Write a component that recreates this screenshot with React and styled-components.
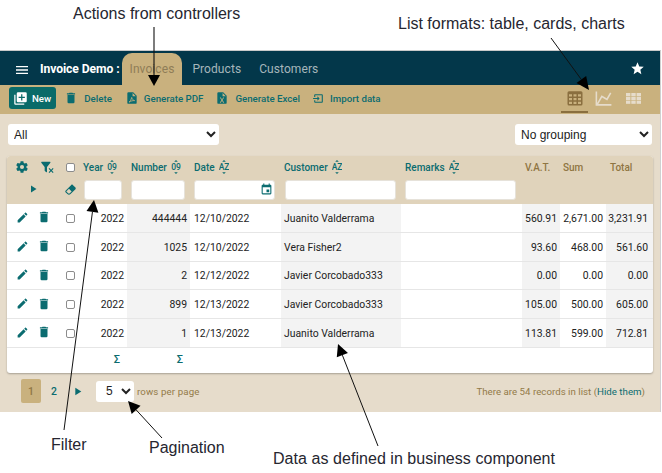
import React from 'react';
import styled, { createGlobalStyle } from 'styled-components';

const Global = createGlobalStyle`
  html, body { margin: 0; padding: 0; background: #fff; }
  body { font-family: Roboto, "Liberation Sans", sans-serif; }
`;

const TEAL = '#0b6c70';
const COLS = '30px 14px 32px 44px 63px 91px 120px 121px 38px 46px 47px';

const Page = styled.div`
  position: relative;
  width: 662px;
  height: 473px;
  overflow: hidden;
  padding-top: 50px;
  box-sizing: border-box;
`;
const Frame = styled.div`
  width: 660px;
  border-top: 1px solid #c9c9c9;
  border-right: 1px solid #d0d0d0;
  background: #e6dccb;
  height: 361px;
  display: flex;
  flex-direction: column;
  box-sizing: content-box;
`;
const NavBar = styled.div`
  height: 34px;
  background: #03374a;
  display: flex;
  align-items: flex-end;
  padding-left: 14px;
  flex: none;
`;
const Burger = styled.span`
  display: flex;
  width: 16px;
  margin-bottom: 7px;
  color: #fff;
`;
const Brand = styled.span`
  color: #fff;
  font-size: 12.2px;
  font-weight: 700;
  margin: 0 2px 9px 10px;
  white-space: nowrap;
  line-height: 14px;
  letter-spacing: -0.1px;
`;
const Tab = styled.span`
  height: 32px;
  box-sizing: border-box;
  padding: 9px ${p => p.$pad}px 0;
  font-size: 12px;
  line-height: 14px;
  letter-spacing: 0.08px;
  border-radius: 10px 10px 0 0;
  color: ${p => (p.$active ? '#8f7d57' : '#a6b6bb')};
  background: ${p => (p.$active ? '#c9b17e' : 'transparent')};
  margin-right: ${p => p.$gap}px;
`;
const StarSlot = styled.span`
  margin-left: auto;
  margin-right: 15px;
  margin-bottom: 9px;
  display: flex;
  color: #fff;
`;
const ToolBar = styled.div`
  height: 29px;
  flex: none;
  background: #c9b17e;
  display: flex;
  align-items: flex-start;
  padding: 2px 12px 0 9px;
  box-sizing: border-box;
`;
const ActionLink = styled.span`
  display: flex;
  align-items: center;
  gap: ${p => p.$gap ?? 6}px;
  font-size: 9.7px;
  font-weight: 500;
  color: ${p => (p.$primary ? '#fff' : TEAL)};
  background: ${p => (p.$primary ? '#0a6b69' : 'transparent')};
  border-radius: 3px;
  height: 22px;
  padding: 0 ${p => (p.$primary ? 5 : 0)}px 0 ${p => (p.$primary ? 4 : 0)}px;
  margin-right: ${p => p.$mr}px;
  white-space: nowrap;
  box-sizing: border-box;
`;
const Views = styled.div`
  margin: -2px 0 0 auto;
  display: flex;
  align-items: flex-start;
  height: 29px;
`;
const ViewItem = styled.span`
  width: ${p => p.$w}px;
  height: 28px;
  box-sizing: border-box;
  display: flex;
  align-items: center;
  justify-content: center;
  color: ${p => (p.$active ? '#8a6f3f' : '#e6dccb')};
  border-bottom: 2px solid ${p => (p.$active ? '#8a6f3f' : 'transparent')};
`;
const Body = styled.div`
  flex: 1;
  display: flex;
  flex-direction: column;
  padding: 10px 8px 0 7px;
`;
const FilterRow = styled.div`
  display: flex;
  justify-content: space-between;
  height: 21px;
  margin-bottom: 11px;
  padding-left: 1px;
`;
const Select = styled.select`
  width: ${p => p.$w}px;
  height: 21px;
  border: none;
  border-radius: 3px;
  background: #fff;
  font-family: "Liberation Sans", Arial, sans-serif;
  font-size: 12px;
  color: #222;
  padding: 0 0 0 ${p => p.$pl ?? 2}px;
  margin: 0;
  box-sizing: border-box;
  flex: none;
`;
const TableCard = styled.div`
  border-radius: 3px;
  overflow: hidden;
  background: #fff;
  box-shadow: 0 1px 2px rgba(0, 0, 0, 0.28);
  width: 646px;
`;
const HeadRow = styled.div`
  display: grid;
  grid-template-columns: ${COLS};
  height: 48px;
  background: #e0d3bb;
`;
const IconStack = styled.div`
  display: flex;
  flex-direction: column;
  color: ${TEAL};
  padding: 4px 0 0 ${p => p.$pl ?? 0}px;
  gap: 8px;
  min-width: 0;
`;
const IconLine = styled.span`
  display: flex;
  height: 14px;
  align-items: center;
  justify-content: ${p => (p.$end ? 'flex-end' : 'center')};
  margin-right: ${p => (p.$end ? -2 : 0)}px;
`;
const HeadCol = styled.div`
  padding: 4px ${p => p.$r ?? 5}px 0 ${p => p.$l ?? 4}px;
  box-sizing: border-box;
`;
const HeadLabel = styled.div`
  display: flex;
  align-items: center;
  gap: 4px;
  height: 14px;
  margin-left: ${p => p.$ml ?? 0}px;
  font-size: 10px;
  font-weight: 500;
  color: ${p => (p.$muted ? '#8f7542' : TEAL)};
  white-space: nowrap;
`;
const FilterBox = styled.div`
  position: relative;
  margin-top: 6px;
  height: 20px;
  background: #fff;
  border-radius: 3px;
  border: 1px solid #e6e2da;
  box-sizing: border-box;
  color: ${TEAL};
`;
const CalendarSlot = styled.span`
  position: absolute;
  right: 1px;
  top: 2px;
  display: flex;
`;
const Row = styled.div`
  display: grid;
  grid-template-columns: ${COLS};
  height: 28.75px;
  border-bottom: 1px solid #e6e6e6;
  box-sizing: border-box;
`;
const Cell = styled.div`
  display: flex;
  align-items: center;
  justify-content: ${p => (p.$right ? 'flex-end' : 'flex-start')};
  padding: 1px ${p => p.$pr ?? 3}px 0 ${p => p.$pl ?? 3}px;
  font-size: 10.4px;
  color: #222;
  background: ${p => (p.$shade ? '#f3f3f3' : '#fff')};
  white-space: nowrap;
  overflow: hidden;
`;
const ActionCell = styled.div`
  display: flex;
  align-items: center;
  justify-content: center;
  color: ${TEAL};
  padding: ${p => p.$pt ?? 0}px 0 ${p => p.$pb ?? 1}px ${p => p.$pl ?? 0}px;
`;
const Check = styled.span`
  display: block;
  width: 7px;
  height: 7px;
  border: 1px solid #8c8c8c;
  border-radius: 2px;
  background: #fff;
`;
const SumRow = styled.div`
  display: grid;
  grid-template-columns: ${COLS};
  height: 24.75px;
`;
const SumCell = styled.div`
  display: flex;
  align-items: center;
  justify-content: flex-end;
  color: ${TEAL};
  font-size: 11px;
  font-weight: 500;
  padding: 0 7px 1px 0;
`;
const Pager = styled.div`
  display: flex;
  align-items: center;
  height: 39px;
  padding: 0 0 2px 14px;
  box-sizing: border-box;
  font-size: 9.7px;
  color: #937a48;
`;
const PageNum = styled.span`
  width: 20px;
  height: 24px;
  display: flex;
  align-items: center;
  justify-content: center;
  border-radius: 2px;
  font-weight: 500;
  font-size: 10.4px;
  color: ${p => (p.$active ? '#8f7542' : TEAL)};
  background: ${p => (p.$active ? '#c9b17e' : 'transparent')};
  margin-right: ${p => p.$mr}px;
`;
const NextSlot = styled.span`
  display: flex;
  color: ${TEAL};
  margin-right: 12.3px;
`;
const RowsLabel = styled.span`
  margin-left: 3px;
  letter-spacing: 0.12px;
`;
const Counter = styled.span`
  margin-left: auto;
  margin-right: 7px;
  letter-spacing: 0.02px;
`;
const HideLink = styled.span`
  color: ${TEAL};
`;
const Note = styled.div`
  position: absolute;
  left: ${p => p.$x}px;
  top: ${p => p.$y}px;
  font-family: "Liberation Sans", Arial, sans-serif;
  font-size: 16px;
  line-height: 18px;
  color: #262630;
  white-space: nowrap;
  letter-spacing: ${p => p.$ls ?? 0}px;
`;
const ArrowLayer = styled.svg`
  position: absolute;
  left: 0;
  top: 0;
  pointer-events: none;
`;

const Mdi = ({ d, s = 14, c = 'currentColor' }) => (
  <svg width={s} height={s} viewBox="0 0 24 24" fill={c} style={{ flex: 'none' }}><path d={d} /></svg>
);
const P = {
  menu: 'M3,6H21V8H3V6M3,11H21V13H3V11M3,16H21V18H3V16Z',
  star: 'M12,17.27L18.18,21L16.54,13.97L22,9.24L14.81,8.62L12,2L9.19,8.62L2,9.24L7.45,13.97L5.82,21L12,17.27Z',
  del: 'M19,4H15.5L14.5,3H9.5L8.5,4H5V6H19M6,19A2,2 0 0,0 8,21H16A2,2 0 0,0 18,19V7H6V19Z',
  pencil: 'M20.71,7.04C21.1,6.65 21.1,6 20.71,5.63L18.37,3.29C18,2.9 17.35,2.9 16.96,3.29L15.12,5.12L18.87,8.87M3,17.25V21H6.75L17.81,9.93L14.06,6.18L3,17.25Z',
  cog: 'M12,15.5A3.5,3.5 0 0,1 8.5,12A3.5,3.5 0 0,1 12,8.5A3.5,3.5 0 0,1 15.5,12A3.5,3.5 0 0,1 12,15.5M19.43,12.97C19.47,12.65 19.5,12.33 19.5,12C19.5,11.67 19.47,11.34 19.43,11L21.54,9.37C21.73,9.22 21.78,8.95 21.66,8.73L19.66,5.27C19.54,5.05 19.27,4.96 19.05,5.05L16.56,6.05C16.04,5.66 15.5,5.32 14.87,5.07L14.5,2.42C14.46,2.18 14.25,2 14,2H10C9.75,2 9.54,2.18 9.5,2.42L9.13,5.07C8.5,5.32 7.96,5.66 7.44,6.05L4.95,5.05C4.73,4.96 4.46,5.05 4.34,5.27L2.34,8.73C2.21,8.95 2.27,9.22 2.46,9.37L4.57,11C4.53,11.34 4.5,11.67 4.5,12C4.5,12.33 4.53,12.65 4.57,12.97L2.46,14.63C2.27,14.78 2.21,15.05 2.34,15.27L4.34,18.73C4.46,18.95 4.73,19.03 4.95,18.95L7.44,17.94C7.96,18.34 8.5,18.68 9.13,18.93L9.5,21.58C9.54,21.82 9.75,22 10,22H14C14.25,22 14.46,21.82 14.5,21.58L14.87,18.93C15.5,18.67 16.04,18.34 16.56,17.94L19.05,18.95C19.27,19.03 19.54,18.95 19.66,18.73L21.66,15.27C21.78,15.05 21.73,14.78 21.54,14.63L19.43,12.97Z',
  play: 'M8,5.14V19.14L19,12.14L8,5.14Z',
  eraser: 'M16.24,3.56L21.19,8.5C21.97,9.29 21.97,10.55 21.19,11.34L12,20.53C10.44,22.09 7.91,22.09 6.34,20.53L2.81,17C2.03,16.21 2.03,14.95 2.81,14.16L13.41,3.56C14.2,2.78 15.46,2.78 16.24,3.56M4.22,15.58L7.76,19.11C8.54,19.9 9.8,19.9 10.59,19.11L14.12,15.58L9.17,10.63L4.22,15.58Z',
  cal: 'M19,19H5V8H19M16,1V3H8V1H6V3H5C3.89,3 3,3.89 3,5V19A2,2 0 0,0 5,21H19A2,2 0 0,0 21,19V5C21,3.89 20.1,3 19,3H18V1M17,12H12V17H17V12Z',
  chart: 'M16,11.78L20.24,4.45L21.97,5.45L16.74,14.5L10.23,10.75L5.46,19H22V21H2V3H4V17.54L9.5,8L16,11.78Z',
  table: 'M4,3H20A2,2 0 0,1 22,5V20A2,2 0 0,1 20,22H4A2,2 0 0,1 2,20V5A2,2 0 0,1 4,3M4,7V10H8V7H4M10,7V10H14V7H10M20,10V7H16V10H20M4,12V15H8V12H4M4,20H8V17H4V20M10,12V15H14V12H10M10,20H14V17H10V20M20,20V17H16V20H20M20,12H16V15H20V12Z',
  filterX: 'M14.76,20.83L17.6,18L14.76,15.17L16.17,13.76L19,16.57L21.83,13.76L23.24,15.17L20.43,18L23.24,20.83L21.83,22.24L19,19.4L16.17,22.24L14.76,20.83M12,12V19.88C12.04,20.18 11.94,20.5 11.71,20.71C11.32,21.1 10.69,21.1 10.3,20.71L8.29,18.7C8.06,18.47 7.96,18.16 8,17.87V12H7.97L2.21,4.62C1.87,4.19 1.95,3.56 2.38,3.22C2.57,3.08 2.78,3 3,3V3H17V3C17.22,3 17.43,3.08 17.62,3.22C18.05,3.56 18.13,4.19 17.79,4.62L12.03,12H12Z',
  plusBoxes: 'M19,11H15V15H13V11H9V9H13V5H15V9H19M20,2H8A2,2 0 0,0 6,4V16A2,2 0 0,0 8,18H20A2,2 0 0,0 22,16V4A2,2 0 0,0 20,2M4,6H2V20A2,2 0 0,0 4,22H18V20H4V6Z',
  importData: 'M14,12L10,8V11H2V13H10V16M20,18V6C20,4.89 19.1,4 18,4H6A2,2 0 0,0 4,6V9H6V6H18V18H6V15H4V18A2,2 0 0,0 6,20H18C19.1,20 20,19.1 20,18Z',
  excel: 'M14,2H6A2,2 0 0,0 4,4V20A2,2 0 0,0 6,22H18A2,2 0 0,0 20,20V8L14,2M15.8,20H14L12,16.6L10,20H8.2L11.1,15.5L8.2,11H10L12,14.4L14,11H15.8L12.9,15.5L15.8,20M13,9V3.5L18.5,9H13Z',
  file: 'M14,2H6A2,2 0 0,0 4,4V20A2,2 0 0,0 6,22H18A2,2 0 0,0 20,20V8L14,2M13,9V3.5L18.5,9H13Z',
};

const PdfIcon = () => (
  <svg width="14" height="14" viewBox="0 0 24 24" style={{ flex: 'none' }}>
    <path d={P.file} fill="currentColor" />
    <path d="M7 19c2-1 3.500-4 4.500-8 .8 3 2.500 5 5 5.500-3-.3-6.500.6-9.500 2.500z" fill="none" stroke="#c9b17e" strokeWidth="1.4" />
  </svg>
);

const Comfy = () => (
  <svg width="15" height="11" viewBox="0 0 15 11" fill="currentColor">
    {[0, 5.3, 10.6].map(x => [0, 3.8, 7.6].map(y => <rect key={`${x}-${y}`} x={x} y={y} width="4.400" height="3.200" />))}
  </svg>
);

const SortIcon = ({ label }) => (
  <svg width="10" height="14" viewBox="0 0 10 14" fill="currentColor">
    <path d="M5 0L6.800 1.800H3.200ZM5 14L3.200 12.200H6.800Z" />
    <text x="5" y="10.300" textAnchor="middle" fontSize="8.500" fontWeight="500" fontFamily="Roboto, sans-serif">{label}</text>
  </svg>
);

const ARROWS = [
  { x1: 154, y1: 27, x2: 154, y2: 86, w: 1.1, hl: 11, hw: 6 },
  { x1: 551, y1: 38, x2: 589, y2: 90, w: 1, hl: 13, hw: 6 },
  { x1: 64, y1: 430, x2: 94, y2: 200, w: 1, hl: 12, hw: 6 },
  { x1: 162, y1: 438, x2: 128, y2: 401, w: 1, hl: 12, hw: 6 },
  { x1: 378, y1: 446, x2: 338, y2: 344, w: 1, hl: 12, hw: 6 },
];

const Arrow = ({ x1, y1, x2, y2, w, hl, hw }) => {
  const len = Math.hypot(x2 - x1, y2 - y1);
  const ux = (x2 - x1) / len;
  const uy = (y2 - y1) / len;
  const bx = x2 - ux * hl;
  const by = y2 - uy * hl;
  const pts = `${x2},${y2} ${bx - uy * hw},${by + ux * hw} ${bx + uy * hw},${by - ux * hw}`;
  return (
    <g>
      <line x1={x1} y1={y1} x2={bx} y2={by} stroke="#111" strokeWidth={w} />
      <polygon points={pts} fill="#000" />
    </g>
  );
};

const rows = [
  ['2022', '444444', '12/10/2022', 'Juanito Valderrama', '560.91', '2,671.00', '3,231.91'],
  ['2022', '1025', '12/10/2022', 'Vera Fisher2', '93.60', '468.00', '561.60'],
  ['2022', '2', '12/12/2022', 'Javier Corcobado333', '0.00', '0.00', '0.00'],
  ['2022', '899', '12/13/2022', 'Javier Corcobado333', '105.00', '500.00', '605.00'],
  ['2022', '1', '12/13/2022', 'Juanito Valderrama', '113.81', '599.00', '712.81'],
];

const filterCols = [
  { label: 'Year', sort: '09', l: 1, r: 5, ml: -1 },
  { label: 'Number', sort: '09', l: 4, r: 5 },
  { label: 'Date', sort: 'AZ', l: 4, r: 6, cal: true },
  { label: 'Customer', sort: 'AZ', l: 4, r: 5, ml: -1 },
  { label: 'Remarks', sort: 'AZ', l: 4, r: 6 },
];

export default function App() {
  return (
    <Page>
      <Global />
      <Frame>
        <NavBar>
          <Burger><Mdi d={P.menu} s={16} /></Burger>
          <Brand>Invoice Demo :</Brand>
          <Tab $active $pad={8} $gap={10}>Invoices</Tab>
          <Tab $pad={0} $gap={18}>Products</Tab>
          <Tab $pad={0} $gap={0}>Customers</Tab>
          <StarSlot><Mdi d={P.star} s={15} /></StarSlot>
        </NavBar>
        <ToolBar>
          <ActionLink $primary $gap={4} $mr={8}><Mdi d={P.plusBoxes} s={15} />New</ActionLink>
          <ActionLink $mr={13}><Mdi d={P.del} s={14} />Delete</ActionLink>
          <ActionLink $mr={12} $gap={5}><PdfIcon />Generate PDF</ActionLink>
          <ActionLink $mr={12}><Mdi d={P.excel} s={14} />Generate Excel</ActionLink>
          <ActionLink $gap={5}><Mdi d={P.importData} s={13} />Import data</ActionLink>
          <Views>
            <ViewItem $active $w={27}><Mdi d={P.table} s={18} /></ViewItem>
            <ViewItem $w={30}><Mdi d={P.chart} s={19} /></ViewItem>
            <ViewItem $w={30}><Comfy /></ViewItem>
          </Views>
        </ToolBar>
        <Body>
          <FilterRow>
            <Select $w={211} defaultValue="All"><option>All</option></Select>
            <Select $w={137} defaultValue="No grouping"><option>No grouping</option></Select>
          </FilterRow>
          <TableCard>
            <HeadRow>
              <IconStack>
                <IconLine><Mdi d={P.cog} s={14} /></IconLine>
                <IconLine $end><Mdi d={P.play} s={12} /></IconLine>
              </IconStack>
              <IconStack $pl={6}>
                <IconLine><Mdi d={P.filterX} s={14} /></IconLine>
              </IconStack>
              <IconStack $pl={6}>
                <IconLine><Check /></IconLine>
                <IconLine><Mdi d={P.eraser} s={13} /></IconLine>
              </IconStack>
              {filterCols.map(c => (
                <HeadCol key={c.label} $l={c.l} $r={c.r}>
                  <HeadLabel $ml={c.ml}>{c.label}<SortIcon label={c.sort} /></HeadLabel>
                  <FilterBox>
                    {c.cal && <CalendarSlot><Mdi d={P.cal} s={13} /></CalendarSlot>}
                  </FilterBox>
                </HeadCol>
              ))}
              <HeadCol $l={3} $r={0}><HeadLabel $muted>V.A.T.</HeadLabel></HeadCol>
              <HeadCol $l={3} $r={0}><HeadLabel $muted>Sum</HeadLabel></HeadCol>
              <HeadCol $l={4} $r={0}><HeadLabel $muted>Total</HeadLabel></HeadCol>
            </HeadRow>
            {rows.map((r, i) => (
              <Row key={i}>
                <ActionCell><Mdi d={P.pencil} s={13} /></ActionCell>
                <ActionCell><Mdi d={P.del} s={14} /></ActionCell>
                <ActionCell $pt={1} $pb={0} $pl={6}><Check /></ActionCell>
                <Cell $right>{r[0]}</Cell>
                <Cell $right $shade>{r[1]}</Cell>
                <Cell $pl={4}>{r[2]}</Cell>
                <Cell $shade>{r[3]}</Cell>
                <Cell />
                <Cell $right $shade>{r[4]}</Cell>
                <Cell $right>{r[5]}</Cell>
                <Cell $right $shade $pr={5}>{r[6]}</Cell>
              </Row>
            ))}
            <SumRow>
              <span /><span /><span />
              <SumCell>Σ</SumCell>
              <SumCell>Σ</SumCell>
            </SumRow>
          </TableCard>
          <Pager>
            <PageNum $active $mr={3}>1</PageNum>
            <PageNum $mr={6.7}>2</PageNum>
            <NextSlot><Mdi d={P.play} s={13} /></NextSlot>
            <Select $w={38} $pl={6} defaultValue="5"><option>5</option></Select>
            <RowsLabel>rows per page</RowsLabel>
            <Counter>There are 54 records in list (<HideLink>Hide them</HideLink>)</Counter>
          </Pager>
        </Body>
      </Frame>
      <ArrowLayer width="662" height="473" viewBox="0 0 662 473">
        {ARROWS.map((a, i) => <Arrow key={i} {...a} />)}
      </ArrowLayer>
      <Note $x={73} $y={5}>Actions from controllers</Note>
      <Note $x={398} $y={15}>List formats: table, cards, charts</Note>
      <Note $x={51} $y={436}>Filter</Note>
      <Note $x={149} $y={439}>Pagination</Note>
      <Note $x={273} $y={450} $ls={0.05}>Data as defined in business component</Note>
    </Page>
  );
}
